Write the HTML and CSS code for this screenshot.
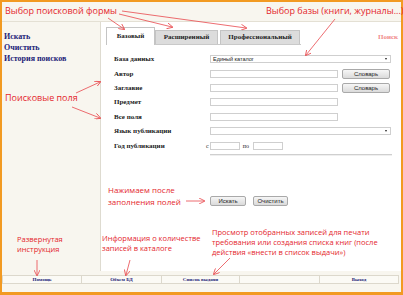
FILE: index.html
```html
<!DOCTYPE html>
<html lang="ru">
<head>
    <meta charset="UTF-8">
    <title>Электронный каталог</title>
    <link rel="stylesheet" href="styles.css">
</head>
<body>
    <div class="shot">
        <div class="frame">
            <div class="header"></div>

            <div class="middle">
                <div class="sidebar">
                    <a class="side-link">Искать</a>
                    <a class="side-link">Очистить</a>
                    <a class="side-link">История поисков</a>
                </div>

                <div class="main">
                    <div class="tabs">
                        <div class="tab active">Базовый</div>
                        <div class="tab">Расширенный</div>
                        <div class="tab">Профессиональный</div>
                        <div class="search-title">Поиск</div>
                    </div>

                    <div class="form">
                        <div class="label">База данных</div>
                        <div class="field"><div class="select wide">Единый каталог</div></div>

                        <div class="label">Автор</div>
                        <div class="field"><div class="input"></div><div class="btn dict">Словарь</div></div>

                        <div class="label">Заглавие</div>
                        <div class="field"><div class="input"></div><div class="btn dict">Словарь</div></div>

                        <div class="label">Предмет</div>
                        <div class="field"><div class="input"></div></div>

                        <div class="label">Все поля</div>
                        <div class="field"><div class="input"></div></div>

                        <div class="label">Язык публикации</div>
                        <div class="field"><div class="select wide"></div></div>

                        <div class="label">Год публикации</div>
                        <div class="field year">
                            <span class="from">с</span>
                            <div class="input short"></div>
                            <span>по</span>
                            <div class="input short"></div>
                        </div>
                    </div>

                    <div class="separator"></div>

                    <div class="actions">
                        <div class="btn">Искать</div>
                        <div class="btn">Очистить</div>
                    </div>
                </div>
            </div>

            <div class="footer">
                <div class="cell">Помощь</div>
                <div class="cell">Объем БД</div>
                <div class="cell">Список выдачи</div>
                <div class="cell"></div>
                <div class="cell">Выход</div>
            </div>
        </div>

        <!-- callouts drawn over the screenshot -->
        <div class="notes">
            <div class="note big n-form">Выбор поисковой формы</div>
            <div class="note big n-base">Выбор базы (книги, журналы...)</div>
            <div class="note big n-fields">Поисковые поля</div>
            <div class="note n-press">Нажимаем после<br>заполнения полей</div>
            <div class="note small n-help">Развернутая<br>инструкция</div>
            <div class="note small n-info">Информация о количестве<br>записей в каталоге</div>
            <div class="note small n-list">Просмотр отобранных записей для печати<br>требования или создания списка книг (после<br>действия «внести в список выдачи»)</div>

            <svg class="arrows" width="403" height="295" viewBox="0 0 403 295">
                <defs>
                    <marker id="head" markerWidth="6" markerHeight="6" refX="5" refY="3" orient="auto" markerUnits="userSpaceOnUse">
                        <path d="M0,0 L6,3 L0,6" fill="none" stroke="#e8484c" stroke-width="0.8"/>
                    </marker>
                </defs>
                <g stroke="#e8484c" stroke-width="0.8" fill="none" marker-end="url(#head)">
                    <line x1="108" y1="18" x2="124" y2="29"/>
                    <line x1="119" y1="14" x2="172" y2="27"/>
                    <line x1="122" y1="11" x2="246" y2="28"/>
                    <line x1="335" y1="19" x2="306" y2="55"/>
                    <line x1="76" y1="93" x2="100" y2="82"/>
                    <line x1="72" y1="107" x2="100" y2="118"/>
                    <line x1="186" y1="201" x2="204" y2="201"/>
                    <line x1="37" y1="260" x2="37" y2="275"/>
                    <line x1="130" y1="260" x2="126" y2="275"/>
                    <line x1="230" y1="258" x2="214" y2="274"/>
                </g>
            </svg>
        </div>
    </div>
</body>
</html>
```

FILE: styles.css
```css
* {
    margin: 0;
    padding: 0;
    box-sizing: border-box;
}

body {
    width: 403px;
    height: 295px;
    background: white;
    overflow: hidden;
}

.shot {
    position: relative;
    width: 403px;
    height: 295px;
}

.frame {
    width: 403px;
    height: 295px;
    border: 2px solid #f29a22;
    border-bottom-width: 3px;
    background: #f8f6ef;
    display: flex;
    flex-direction: column;
}

.header {
    height: 20px;
    border-bottom: 1px solid #e4e0d4;
}

.middle {
    height: 249px;
    display: flex;
}

.sidebar {
    width: 98px;
    padding: 9px 0 0 2px;
    display: flex;
    flex-direction: column;
}

.side-link {
    font-family: "Liberation Serif", serif;
    font-weight: bold;
    font-size: 8px;
    line-height: 11px;
    color: #1d2478;
}

.main {
    flex: 1;
    background: white;
    border-left: 1px solid #dedbd0;
    padding: 6px 0 0 5px;
}

.tabs {
    display: flex;
    align-items: flex-end;
    height: 17px;
    border-bottom: 1px solid #c9c9c9;
    margin-right: 100px;
}

.tab {
    font-family: "Liberation Serif", serif;
    font-weight: bold;
    font-size: 7px;
    height: 14px;
    line-height: 13px;
    padding: 0 10px;
    background: #dcdcdc;
    border: 1px solid #c4c4c4;
    border-bottom: none;
    color: #222;
    margin-right: 2px;
}

.tab.active {
    height: 18px;
    line-height: 17px;
    width: 49px;
    padding: 0;
    text-align: center;
    background: white;
    margin-bottom: -1px;
    margin-right: 0;
}

.tab:nth-child(2) {
    width: 63px;
    text-align: center;
    padding: 0;
}

.tab:nth-child(3) {
    width: 80px;
    text-align: center;
    padding: 0;
}

.search-title {
    font-family: "Liberation Serif", serif;
    font-weight: bold;
    font-size: 7px;
    color: #f08a8a;
    align-self: flex-start;
    margin: 5px -100px 0 auto;
    width: 23px;
    overflow: hidden;
    white-space: nowrap;
}

.form {
    display: grid;
    grid-template-columns: 96px 181px;
    grid-auto-rows: 14.4px;
    margin: 7px 0 0 8px;
}

.label {
    font-family: "Liberation Serif", serif;
    font-weight: bold;
    font-size: 7px;
    color: #1a1a1a;
    display: flex;
    align-items: center;
}

.field {
    display: flex;
    align-items: center;
    gap: 4px;
}

.input,
.select {
    height: 8px;
    width: 128px;
    border: 1px solid #cfcfcf;
    background: white;
}

.select.wide {
    width: 181px;
    position: relative;
    font-family: "Liberation Sans", sans-serif;
    font-size: 5.5px;
    line-height: 6px;
    padding-left: 2px;
    color: #222;
}

.select.wide::after {
    content: '';
    position: absolute;
    right: 3px;
    top: 2px;
    border: 1.5px solid transparent;
    border-top: 2px solid #222;
}

.btn {
    font-family: "Liberation Sans", sans-serif;
    font-size: 6px;
    color: #222;
    height: 10px;
    line-height: 8px;
    text-align: center;
    border: 1px solid #a9a9a9;
    border-radius: 2px;
    background: linear-gradient(#f6f6f6, #dadada);
}

.btn.dict {
    width: 48px;
}

.year {
    gap: 0;
}

.year span {
    font-family: "Liberation Serif", serif;
    font-size: 6px;
    color: #222;
}

.year .from {
    margin-left: -4px;
    margin-right: 1px;
}

.input.short {
    width: 30px;
    margin-right: 3px;
}

.year .input.short + span {
    margin-right: 4px;
}

.separator {
    margin: 1px 0 0 104px;
    width: 182px;
    height: 2px;
    border-top: 1px solid #cfcfcf;
    border-bottom: 1px solid #efefef;
}

.actions {
    display: flex;
    gap: 7px;
    margin: 40px 0 0 104px;
}

.actions .btn {
    height: 10px;
    width: 36px;
}

.actions .btn + .btn {
    width: 35px;
}

.footer {
    margin-top: 4px;
    display: grid;
    grid-template-columns: 80px 80px 78px 80px 79px;
    height: 9px;
}

.cell {
    font-family: "Liberation Serif", serif;
    font-weight: bold;
    font-size: 5px;
    line-height: 7px;
    color: #1d2478;
    text-align: center;
    border: 1px solid #dcd8cc;
    border-left: none;
    background: #fbfaf5;
}

.cell:first-child {
    border-left: 1px solid #dcd8cc;
}

.notes {
    position: absolute;
    inset: 0;
    pointer-events: none;
}

.arrows {
    position: absolute;
    left: 0;
    top: 0;
}

.note {
    position: absolute;
    font-family: "Open Sans", sans-serif;
    color: #e4262c;
    font-size: 8px;
    line-height: 12px;
    white-space: nowrap;
}

.note.big {
    font-size: 9px;
    line-height: 12px;
}

.note.small {
    font-size: 7.5px;
    line-height: 10px;
}

.n-form { left: 5px; top: 5px; }
.n-base { left: 266px; top: 5px; }
.n-fields { left: 5px; top: 92px; }
.n-press { left: 108px; top: 184px; }
.n-help { left: 17px; top: 234px; }
.n-info { left: 102px; top: 233px; }
.n-list { left: 212px; top: 227px; font-size: 6.6px; }
```
